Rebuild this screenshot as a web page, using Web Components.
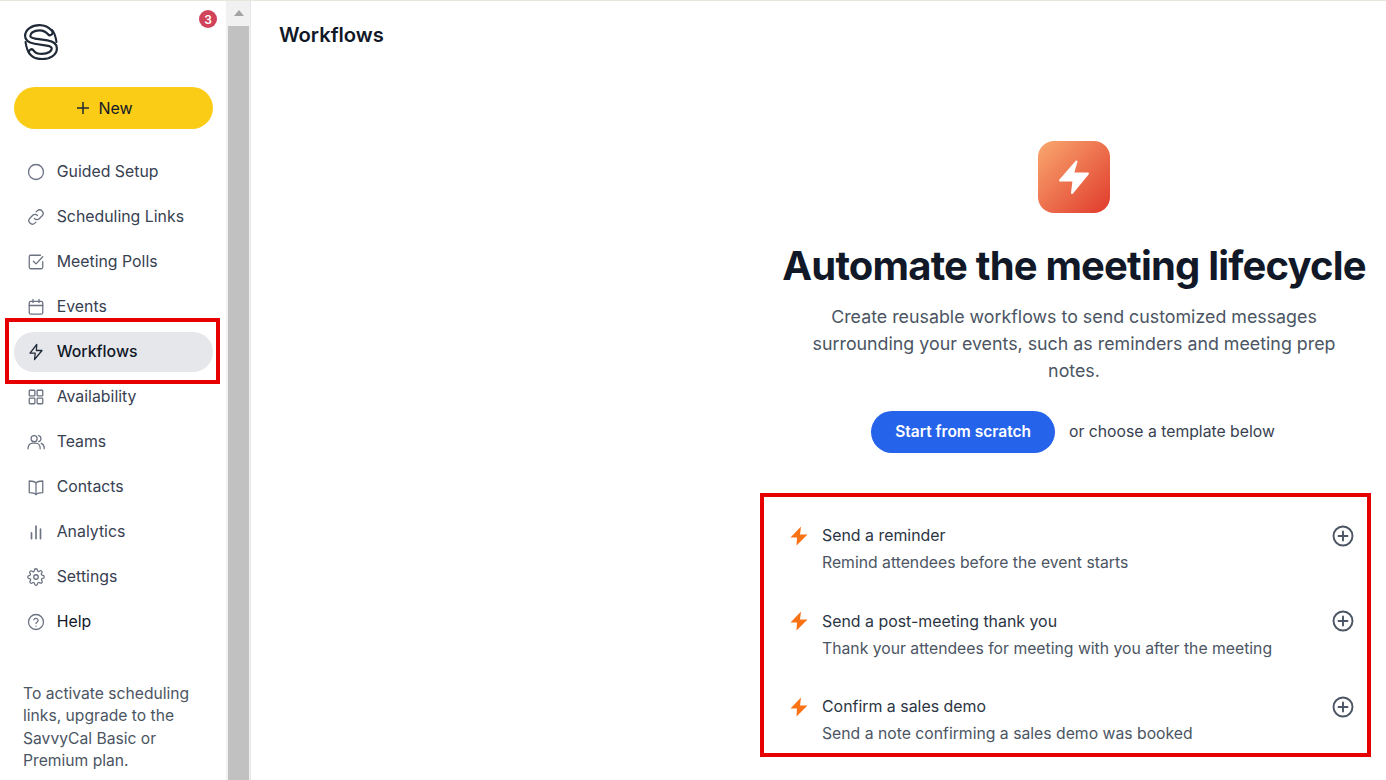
<!DOCTYPE html>
<html>
<head>
<meta charset="utf-8">
<style>
  html, body { margin: 0; height: 100%; overflow: hidden; background: #fff; }
  body { font-family: Inter, "Liberation Sans", sans-serif; }
</style>
</head>
<body>
<app-shell>
  <side-bar slot="side">
    <nav-item label="Guided Setup" icon="circle"></nav-item>
    <nav-item label="Scheduling Links" icon="link"></nav-item>
    <nav-item label="Meeting Polls" icon="check"></nav-item>
    <nav-item label="Events" icon="calendar"></nav-item>
    <nav-item label="Workflows" icon="bolt" active></nav-item>
    <nav-item label="Availability" icon="grid"></nav-item>
    <nav-item label="Teams" icon="users"></nav-item>
    <nav-item label="Contacts" icon="book"></nav-item>
    <nav-item label="Analytics" icon="bars"></nav-item>
    <nav-item label="Settings" icon="gear"></nav-item>
    <nav-item label="Help" icon="help" dark></nav-item>
  </side-bar>
  <workflows-page slot="main">
    <template-row title="Send a reminder" desc="Remind attendees before the event starts"></template-row>
    <template-row title="Send a post-meeting thank you" desc="Thank your attendees for meeting with you after the meeting"></template-row>
    <template-row title="Confirm a sales demo" desc="Send a note confirming a sales demo was booked"></template-row>
  </workflows-page>
</app-shell>

<script>
const ICONS = {
  circle: '<circle cx="12" cy="12" r="10"/>',
  link: '<path d="M10 14a4.6 4.6 0 0 0 6.6 0l3.6-3.6a4.67 4.67 0 0 0-6.6-6.6l-1.4 1.4"/><path d="M14 10a4.6 4.6 0 0 0-6.6 0l-3.6 3.6a4.67 4.67 0 0 0 6.6 6.6l1.4-1.4"/>',
  check: '<path d="M21 11.5V19a2 2 0 0 1-2 2H5a2 2 0 0 1-2-2V5a2 2 0 0 1 2-2h13"/><path d="M8.5 11l3.5 3.5L21 5"/>',
  calendar: '<rect x="3" y="4.5" width="18" height="17" rx="2"/><path d="M3 10h18M8 2v4M16 2v4"/>',
  bolt: '<path d="M13 2 4 13.5h7L10 22l10-12h-7.5L13 2z"/>',
  grid: '<rect x="3" y="3" width="7.5" height="7.5" rx="1"/><rect x="13.5" y="3" width="7.5" height="7.5" rx="1"/><rect x="3" y="13.5" width="7.5" height="7.5" rx="1"/><rect x="13.5" y="13.5" width="7.5" height="7.5" rx="1"/>',
  users: '<circle cx="9.5" cy="7.5" r="4"/><path d="M1.5 21v-1.5a6 6 0 0 1 6-6h4a6 6 0 0 1 6 6V21"/><path d="M15.5 3.6a4 4 0 0 1 0 7.8"/><path d="M19 13.8a6 6 0 0 1 3.8 5.6V21"/>',
  book: '<path d="M12 6.5C10.5 4.8 8 4 3 4v15.5c5 0 7.500.8 9 2.500 1.500-1.700 4-2.500 9-2.500V4c-5 0-7.500.8-9 2.500z"/><path d="M12 6.500V22"/>',
  bars: '<path stroke-width="2.200" d="M6 21v-8M12 21V4M18 21V8"/>',
  gear: '<circle cx="12" cy="12" r="3"/><path d="M19.400 15a1.650 1.650 0 0 0 .33 1.820l.06.06a2 2 0 1 1-2.830 2.830l-.06-.06a1.650 1.650 0 0 0-2.800 1.170V21a2 2 0 1 1-4 0v-.09a1.650 1.650 0 0 0-2.800-1.120l-.06.06a2 2 0 1 1-2.830-2.830l.06-.06a1.650 1.650 0 0 0-1.170-2.800H3a2 2 0 1 1 0-4h.09a1.650 1.650 0 0 0 1.120-2.800l-.06-.06a2 2 0 1 1 2.830-2.830l.06.06a1.650 1.650 0 0 0 2.800-1.170V3a2 2 0 1 1 4 0v.09a1.650 1.650 0 0 0 2.800 1.120l.06-.06a2 2 0 1 1 2.830 2.830l-.06.06a1.650 1.650 0 0 0 1.170 2.800H21a2 2 0 1 1 0 4h-.09a1.650 1.650 0 0 0-1.510 1z"/>',
  help: '<circle cx="12" cy="12" r="10"/><path d="M9.100 9a3 3 0 0 1 5.800 1c0 2-3 2.500-3 4"/><path d="M12 17.500h.01"/>'
};

const LOGO_S = 'M26 8.500C23 5 20 3.700 15.500 3.700 8.500 3.700 3.700 7.500 3.700 12 3.700 15.500 7 16.500 11 17.200L23 19c4 .6 7.300 2 7.300 5.500 0 4.500-5 8-12.300 8-5 0-8.500-1.500-10.500-4.500';

class AppShell extends HTMLElement {
  connectedCallback() {
    this.attachShadow({ mode: 'open' });
    this.shadowRoot.innerHTML = `
      <style>
        :host { display: grid; grid-template-columns: 226px 25px 1fr; height: 780px; border-top: 1px solid #e3e8dc; box-sizing: border-box; position: relative; overflow: hidden; }
        .track { background: #f1f1f1; display: flex; flex-direction: column; border-right: 1px solid #e5e7eb; }
        .arrow { height: 25px; padding: 9px 0 0 1px; display: flex; justify-content: center; box-sizing: border-box; }
        .arrow i { width: 0; height: 0; border: 5.500px solid transparent; border-top: 0; border-bottom: 6px solid #a3a3a3; }
        .thumb { flex: 1; width: 21px; margin-left: 2px; background: #c1c1c1; }
        .mark { position: absolute; border: 4px solid #e70000; box-sizing: border-box; pointer-events: none; }
        .mark.a { left: 5px; top: 317px; width: 215px; height: 66px; }
        .mark.b { left: 760px; top: 492px; width: 611px; height: 264px; }
      </style>
      <slot name="side"></slot>
      <div class="track"><div class="arrow"><i></i></div><div class="thumb"></div></div>
      <slot name="main"></slot>
      <div class="mark a"></div>
      <div class="mark b"></div>
    `;
  }
}

class SideBar extends HTMLElement {
  connectedCallback() {
    this.attachShadow({ mode: 'open' });
    this.shadowRoot.innerHTML = `
      <style>
        :host { display: flex; flex-direction: column; padding: 0 13px 0 14px; position: relative; overflow: hidden; }
        .logo { height: 86px; display: flex; align-items: flex-start; padding: 23px 0 0 10px; box-sizing: border-box; }
        .badge { position: absolute; left: 199px; top: 9px; width: 18px; height: 18px; border-radius: 50%; background: #d1435b; color: #fff; font-size: 12px; font-weight: 600; display: flex; align-items: center; justify-content: center; }
        .new { height: 42px; border-radius: 21px; background: #facc15; color: #111827; font-size: 16px; font-weight: 400; display: flex; align-items: center; justify-content: center; gap: 7px; padding-right: 19px; }
        nav { display: flex; flex-direction: column; gap: 5px; margin-top: 23px; }
        p { margin: 41px 0 0 9px; font-size: 15.660px; line-height: 22.400px; color: #4b5563; width: 180px; }
      </style>
      <div class="logo">
        <svg width="34" height="36" viewBox="0 0 34 36" fill="none" stroke-linecap="round">
          <path stroke="#1f2937" stroke-width="2" d="M28 6c2.500 2.500 3.500 5.500 4.500 12M6 30c-2.500-2.500-3.500-5.500-4.500-12"/>
          <path stroke="#1f2937" stroke-width="7.400" d="${LOGO_S}"/>
          <path stroke="#fff" stroke-width="3" d="${LOGO_S}"/>
        </svg>
      </div>
      <div class="badge">3</div>
      <div class="new">
        <svg width="16" height="16" viewBox="0 0 16 16" fill="none" stroke="#1f2937" stroke-width="1.500"><path d="M8 2v12M2 8h12"/></svg>
        <span>New</span>
      </div>
      <nav><slot></slot></nav>
      <p>To activate scheduling links, upgrade to the SavvyCal Basic or Premium plan.</p>
    `;
  }
}

class NavItem extends HTMLElement {
  connectedCallback() {
    this.attachShadow({ mode: 'open' });
    const active = this.hasAttribute('active');
    const dark = this.hasAttribute('dark');
    this.shadowRoot.innerHTML = `
      <style>
        :host { display: flex; align-items: center; height: 40px; border-radius: 20px; padding-left: 13px; gap: 11.700px; font-size: 15.850px; color: ${active || dark ? '#111827' : '#374151'}; font-weight: ${active ? 500 : 400}; background: ${active ? '#e5e7eb' : 'transparent'}; }
        svg { flex: none; }
        span { padding-bottom: 1px; }
      </style>
      <svg width="18" height="18" viewBox="0 0 24 24" fill="none" stroke="${active ? '#1f2937' : '#6b7280'}" stroke-width="1.700" stroke-linecap="round" stroke-linejoin="round">${ICONS[this.getAttribute('icon')]}</svg>
      <span>${this.getAttribute('label')}</span>
    `;
  }
}

class WorkflowsPage extends HTMLElement {
  connectedCallback() {
    this.attachShadow({ mode: 'open' });
    this.shadowRoot.innerHTML = `
      <style>
        :host { display: block; padding-left: 28px; color: #111827; }
        h1 { margin: 0; padding-top: 21px; font-size: 20.200px; line-height: 26px; font-weight: 600; }
        .col { margin-left: 485px; width: 620px; display: flex; flex-direction: column; align-items: center; }
        .tile { margin-top: 93px; width: 72px; height: 72px; border-radius: 16px; background: linear-gradient(135deg, #f9a86f, #e03a2c); }
        .tile svg { display: block; }
        h2 { margin: 27px 0 0; font-size: 40px; line-height: 52px; font-weight: 700; letter-spacing: -0.820px; white-space: nowrap; }
        .lead { margin: 11px 0 0; width: 560px; text-align: center; font-size: 17.820px; line-height: 27px; color: #4b5563; }
        .cta { display: flex; align-items: center; gap: 14px; margin-top: 27px; margin-left: -2px; }
        .btn { height: 42px; padding: 0 24px 1px; box-sizing: border-box; border-radius: 21px; background: #2563eb; color: #fff; font-size: 15.500px; font-weight: 600; display: flex; align-items: center; }
        .cta span { font-size: 15.750px; color: #374151; padding-bottom: 1px; }
        .list { width: 100%; margin-top: 69.300px; }
      </style>
      <h1>Workflows</h1>
      <div class="col">
        <div class="tile">
          <svg width="72" height="72" viewBox="0 0 72 72" fill="#fff" stroke="#fff" stroke-width="2" stroke-linejoin="round"><path d="M38.500 20.500 35 32.500h15L34 52l1.500-12.500H22z"/></svg>
        </div>
        <h2>Automate the meeting lifecycle</h2>
        <p class="lead">Create reusable workflows to send customized messages surrounding your events, such as reminders and meeting prep notes.</p>
        <div class="cta"><div class="btn">Start from scratch</div><span>or choose a template below</span></div>
        <div class="list"><slot></slot></div>
      </div>
    `;
  }
}

class TemplateRow extends HTMLElement {
  connectedCallback() {
    this.attachShadow({ mode: 'open' });
    this.shadowRoot.innerHTML = `
      <style>
        :host { display: grid; grid-template-columns: 32px 1fr 24px; height: 85.500px; align-content: start; padding: 0 30px 0 26px; box-sizing: border-box; width: 100%; }
        .bolt { align-self: center; }
        b { font-weight: 400; font-size: 15.900px; line-height: 27px; color: #2b3544; }
        small { grid-column: 2; font-size: 15.750px; line-height: 27px; color: #4b5563; }
        .plus { align-self: center; justify-self: end; }
      </style>
      <svg class="bolt" width="18" height="20" viewBox="0 0 18 20" fill="#f97316"><path d="M11 .5 .5 11.500H7L6.500 19.500 17.500 8.500H10z"/></svg>
      <b>${this.getAttribute('title')}</b>
      <svg class="plus" width="22" height="22" viewBox="0 0 22 22" fill="none" stroke="#4b5563" stroke-width="1.900" stroke-linecap="round"><circle cx="11" cy="11" r="9.500"/><path d="M11 6.500v9M6.500 11h9"/></svg>
      <small>${this.getAttribute('desc')}</small>
    `;
  }
}

customElements.define('app-shell', AppShell);
customElements.define('side-bar', SideBar);
customElements.define('nav-item', NavItem);
customElements.define('workflows-page', WorkflowsPage);
customElements.define('template-row', TemplateRow);
</script>
</body>
</html>
